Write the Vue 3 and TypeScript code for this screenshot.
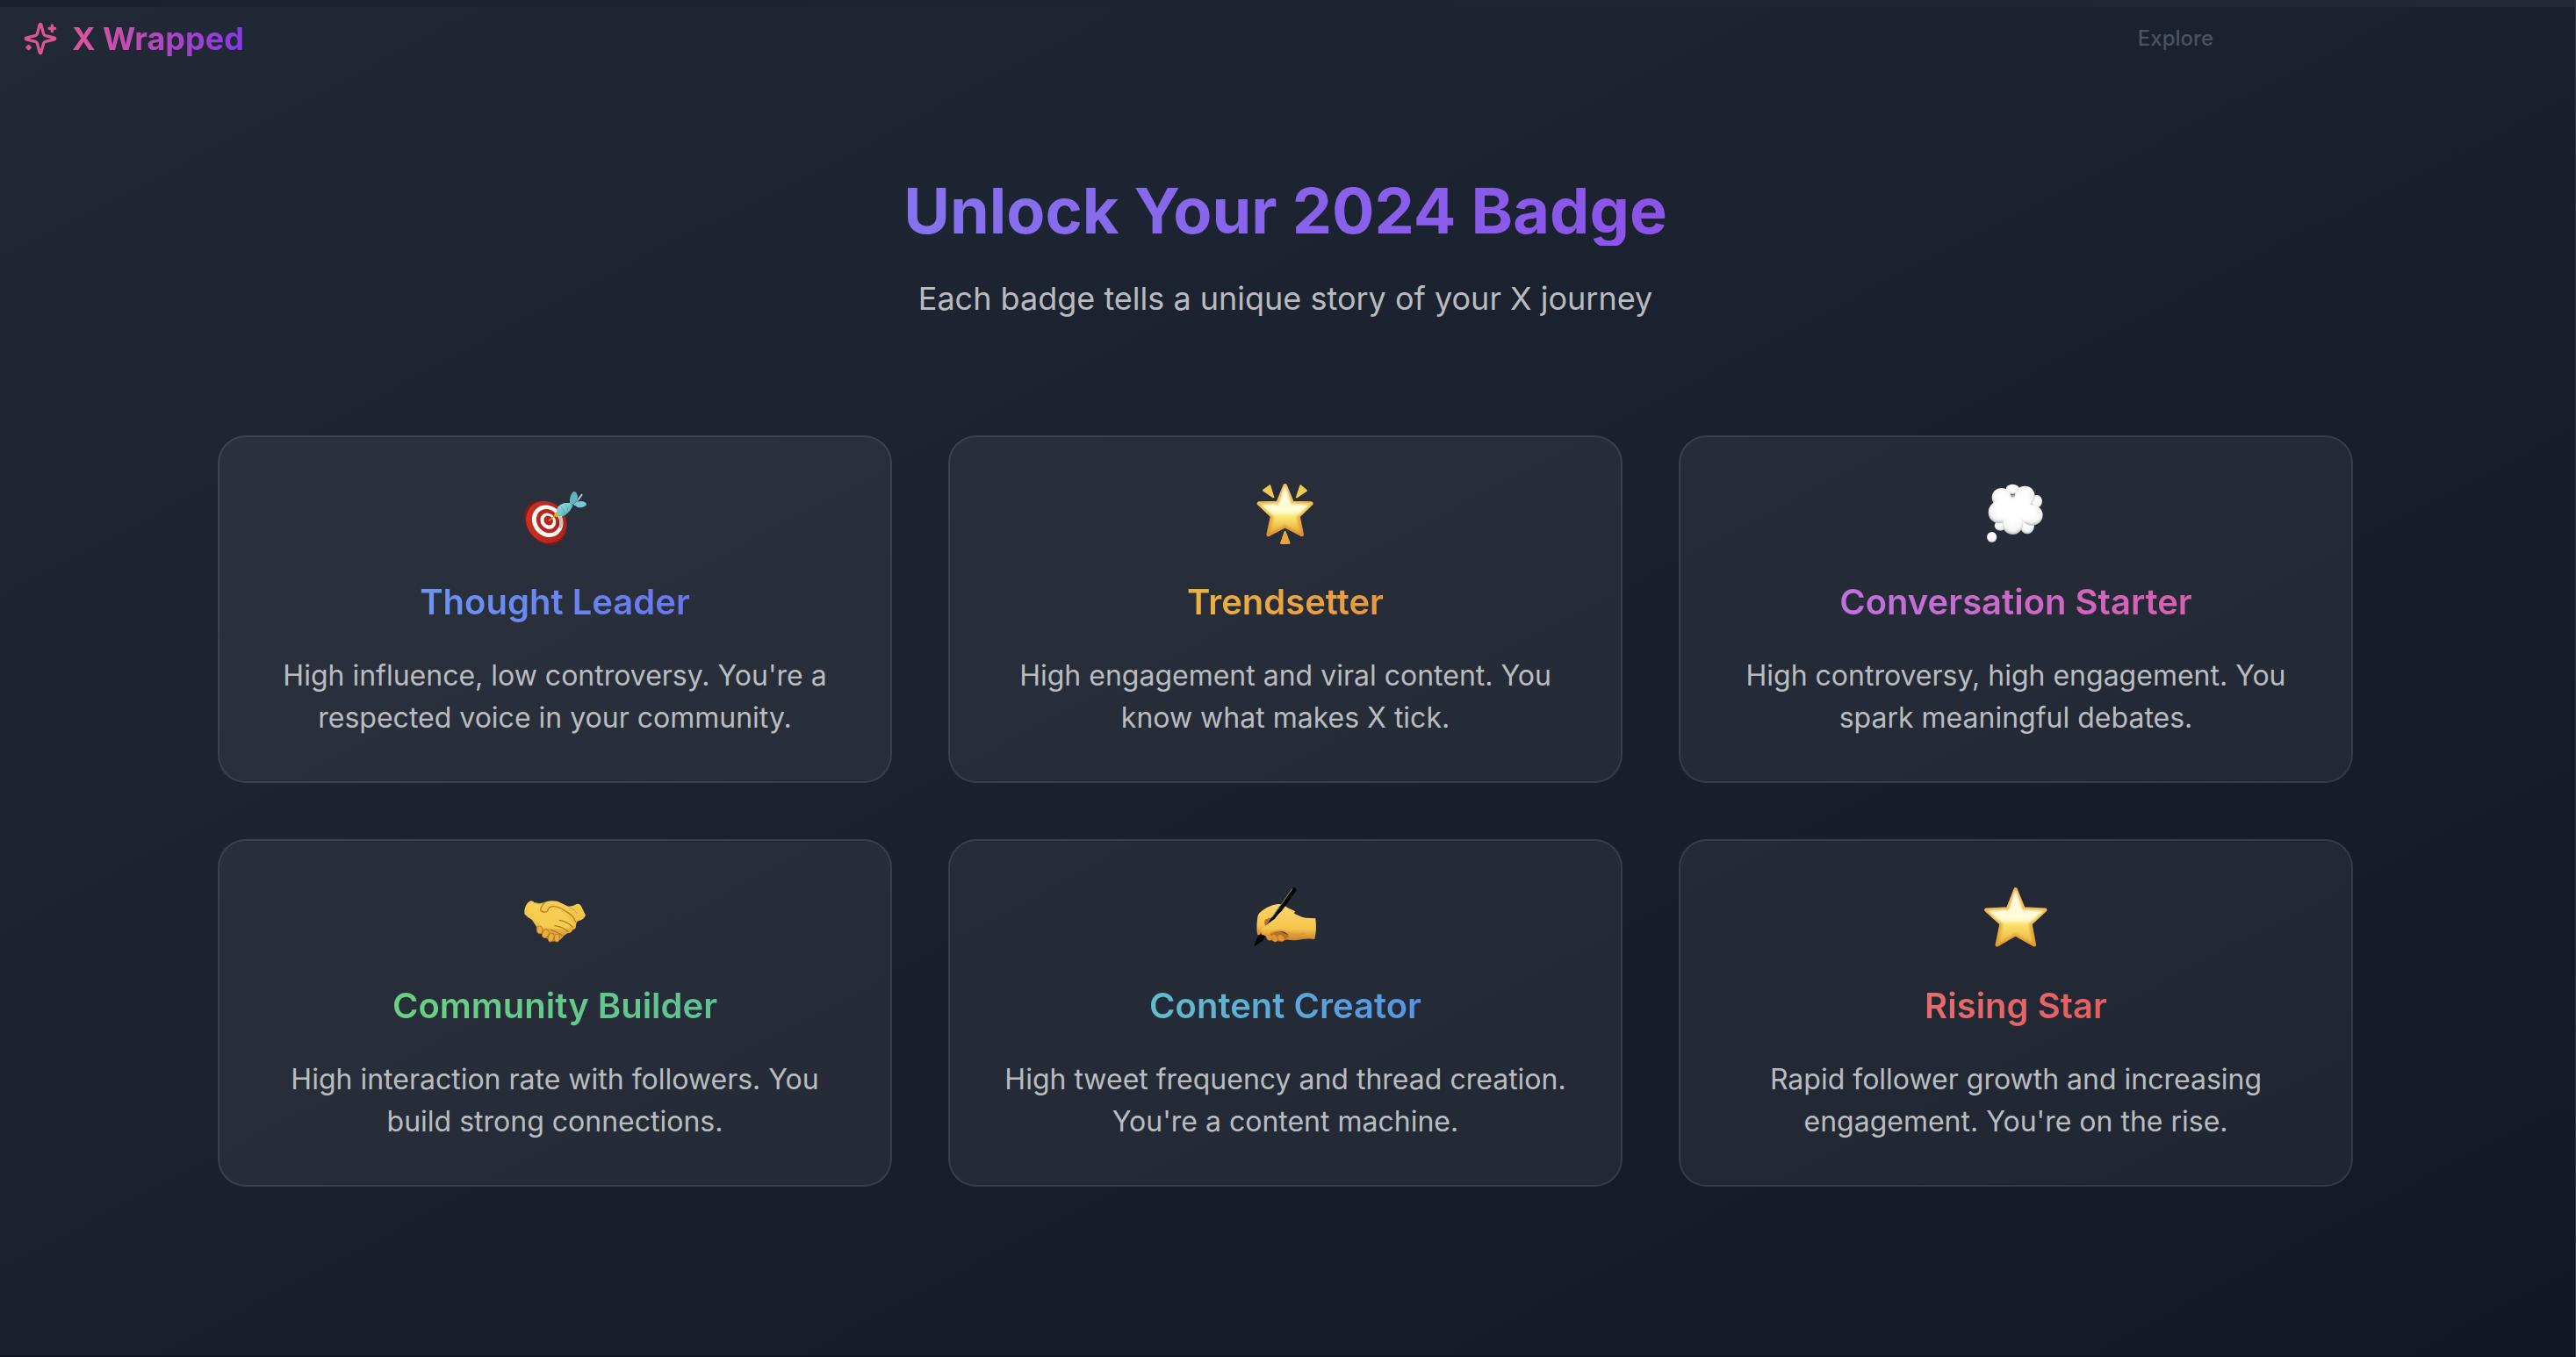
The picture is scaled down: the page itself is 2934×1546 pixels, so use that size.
<script setup lang="ts">
interface Badge {
  id: string
  title: string
  from: string
  to: string
  text: string
}

const badges: Badge[] = [
  { id: 'target', title: 'Thought Leader', from: '#6b95f3', to: '#6976ee', text: "High influence, low controversy. You're a respected voice in your community." },
  { id: 'glow', title: 'Trendsetter', from: '#ecb142', to: '#ea983e', text: 'High engagement and viral content. You know what makes X tick.' },
  { id: 'cloud', title: 'Conversation Starter', from: '#bf72e0', to: '#d95fae', text: 'High controversy, high engagement. You spark meaningful debates.' },
  { id: 'handshake', title: 'Community Builder', from: '#6cd081', to: '#60c295', text: 'High interaction rate with followers. You build strong connections.' },
  { id: 'writing', title: 'Content Creator', from: '#62bdca', to: '#5793e5', text: "High tweet frequency and thread creation. You're a content machine." },
  { id: 'star', title: 'Rising Star', from: '#e56c6c', to: '#e45e5f', text: "Rapid follower growth and increasing engagement. You're on the rise." },
]
</script>

<template>
  <div class="page">
    <div class="screen">
      <header class="header">
        <a class="brand" href="#">
          <svg class="brand-icon" viewBox="0 0 24 24" aria-hidden="true">
            <path d="M9.937 15.5A2 2 0 0 0 8.5 14.063l-6.135-1.582a.5.5 0 0 1 0-.962L8.5 9.936A2 2 0 0 0 9.937 8.5l1.582-6.135a.5.5 0 0 1 .963 0L14.063 8.5A2 2 0 0 0 15.5 9.937l6.135 1.581a.5.5 0 0 1 0 .964L15.5 14.063a2 2 0 0 0-1.437 1.437l-1.582 6.135a.5.5 0 0 1-.963 0z" />
            <path d="M20 3v4M22 5h-4M4 17v2M5 18H3" />
          </svg>
          <span class="brand-name">X Wrapped</span>
        </a>
        <nav><a class="nav-link" href="#explore">Explore</a></nav>
      </header>

      <main class="main">
        <h1 class="title">Unlock Your 2024 Badge</h1>
        <p class="subtitle">Each badge tells a unique story of your X journey</p>

        <div class="grid">
          <article v-for="b in badges" :key="b.id" class="card">
            <svg v-if="b.id === 'target'" class="emoji" viewBox="66 18 240 240" aria-hidden="true">
              <defs>
                <linearGradient id="t-red" x1="0" y1="0" x2="1" y2="1"><stop offset="0" stop-color="#cf3328" /><stop offset="1" stop-color="#a81f1b" /></linearGradient>
                <linearGradient id="t-dart" x1="0" y1="0" x2="1" y2="1"><stop offset="0" stop-color="#9be4ea" /><stop offset="1" stop-color="#4da3b0" /></linearGradient>
              </defs>
              <path d="M81 150C78 120 98 94 128 93L222 185C225 218 202 243 168 243C125 240 85 195 81 150Z" fill="#7f1a18" />
              <ellipse cx="157" cy="164" rx="66" ry="75" transform="rotate(-38 157 164)" fill="url(#t-red)" />
              <ellipse cx="161" cy="161" rx="51" ry="57" transform="rotate(-38 161 161)" fill="#fbf9f6" />
              <ellipse cx="162" cy="161" rx="37" ry="43" transform="rotate(-38 162 161)" fill="#b92620" />
              <ellipse cx="163" cy="161" rx="25" ry="29" transform="rotate(-38 163 161)" fill="#fbf9f6" />
              <ellipse cx="164" cy="159" rx="15" ry="17" transform="rotate(-38 164 159)" fill="#b3241f" />
              <path d="M200 148L213 146Q218 165 207 187L190 178Q200 163 200 148Z" fill="#3b2020" opacity=".25" />
              <path d="M167 159L199 131" stroke="#d9a31c" stroke-width="4" stroke-linecap="round" />
              <path d="M183 139L192 129L204 144L190 148Z" fill="#e5b420" />
              <path d="M254 104L278 71" stroke="#a3c7cc" stroke-width="6" stroke-linecap="round" />
              <path d="M192 130C192 113 202 103 222 99L243 99L248 108Q240 126 224 139Q208 148 200 145Z" fill="url(#t-dart)" />
              <path d="M207 111Q218 120 218 139M222 103Q231 112 231 130" stroke="#398d9c" stroke-width="3" fill="none" opacity=".45" />
              <path d="M237 103Q234 75 249 60Q259 58 264 76Q264 90 252 102Z" fill="#62b5c0" />
              <path d="M246 101Q264 91 283 94Q296 99 293 106Q283 118 264 114Z" fill="#73c8d1" />
              <path d="M241 108L269 88" stroke="#318493" stroke-width="3" />
            </svg>

            <svg v-else-if="b.id === 'glow'" class="emoji" viewBox="57 48 240 240" aria-hidden="true">
              <defs>
                <linearGradient id="g-edge" x1="0" y1="0" x2="0" y2="1"><stop offset="0" stop-color="#f2b95a" /><stop offset=".55" stop-color="#edc04a" /><stop offset="1" stop-color="#dd8f31" /></linearGradient>
                <linearGradient id="g-fill" x1="0" y1="0" x2="0" y2="1"><stop offset="0" stop-color="#fffdf0" /><stop offset=".55" stop-color="#fffbd0" /><stop offset=".66" stop-color="#f9e873" /><stop offset="1" stop-color="#edae3d" /></linearGradient>
                <filter id="g-soft"><feGaussianBlur stdDeviation="3" /></filter>
              </defs>
              <path d="M176 70L200 129L265 131L220 174L233 237L176 207L119 237L133 174L87 131L152 129Z" fill="url(#g-edge)" stroke="url(#g-edge)" stroke-width="14" stroke-linejoin="round" />
              <path d="M176 76L195 134L254 137L212 175L224 227L176 200L128 227L141 175L99 137L157 134Z" fill="url(#g-fill)" stroke="url(#g-fill)" stroke-width="5" stroke-linejoin="round" filter="url(#g-soft)" />
              <path d="M102 86L124 70L136 109ZM229 70L249 87L216 109ZM176 228L190 266H163Z" fill="#edca51" stroke="#edca51" stroke-width="6" stroke-linejoin="round" />
              <path d="M176 228L190 266H163Z" fill="#e7a53d" stroke="#e7a53d" stroke-width="6" stroke-linejoin="round" />
            </svg>

            <svg v-else-if="b.id === 'cloud'" class="emoji" viewBox="63 48 240 240" aria-hidden="true">
              <defs>
                <radialGradient id="c-puff" cx=".5" cy=".4" r=".6"><stop offset="0" stop-color="#fff" /><stop offset=".7" stop-color="#f6f6f6" /><stop offset="1" stop-color="#b8b8ba" /></radialGradient>
                <filter id="c-soft"><feGaussianBlur stdDeviation="6" /></filter>
              </defs>
              <ellipse cx="172" cy="82" rx="23" ry="17" fill="url(#c-puff)" />
              <ellipse cx="255" cy="124" rx="18" ry="22" fill="url(#c-puff)" />
              <ellipse cx="130" cy="207" rx="20" ry="17" fill="url(#c-puff)" />
              <ellipse cx="222" cy="208" rx="24" ry="27" fill="url(#c-puff)" />
              <ellipse cx="134" cy="110" rx="33" ry="32" fill="url(#c-puff)" />
              <ellipse cx="214" cy="105" rx="34" ry="34" fill="url(#c-puff)" />
              <ellipse cx="125" cy="161" rx="36" ry="38" fill="url(#c-puff)" />
              <ellipse cx="238" cy="171" rx="37" ry="35" fill="url(#c-puff)" />
              <ellipse cx="172" cy="201" rx="35" ry="36" fill="url(#c-puff)" />
              <path d="M114 137Q126 102 170 105Q201 91 230 116Q253 140 243 174Q217 198 187 191Q155 203 125 176Z" fill="#fff" filter="url(#c-soft)" />
              <ellipse cx="101" cy="246" rx="17" ry="18" fill="url(#c-puff)" />
            </svg>

            <svg v-else-if="b.id === 'handshake'" class="emoji" viewBox="66 18 240 240" aria-hidden="true">
              <defs>
                <linearGradient id="h-skin" x1="0" y1="0" x2="0" y2="1"><stop offset="0" stop-color="#f7cf54" /><stop offset=".6" stop-color="#eebc43" /><stop offset="1" stop-color="#d19431" /></linearGradient>
              </defs>
              <path d="M82 124Q80 92 100 80Q110 77 115 84Q136 91 151 84Q168 75 196 81L232 98Q249 98 260 90Q272 87 276 97L291 128Q285 143 268 147Q258 151 258 164Q259 175 247 178Q243 190 229 190L217 198Q203 218 190 216Q170 222 164 208Q146 209 142 192Q121 190 124 169L108 144Q91 135 82 124Z" fill="url(#h-skin)" />
              <path d="M91 119Q96 92 109 86L149 97L141 111Q151 122 168 101L197 103L253 158Q238 172 222 177L145 171Z" fill="#f8cf53" opacity=".8" />
              <path d="M151 85Q136 102 137 111Q148 123 161 114Q164 99 179 98Q199 97 225 116Q249 128 257 151" fill="none" stroke="#b97e22" stroke-width="4" stroke-linecap="round" />
              <path d="M202 145Q228 149 246 168M186 164Q215 168 231 185M172 178Q192 184 211 197" fill="none" stroke="#b27720" stroke-width="4" stroke-linecap="round" />
              <g fill="#e9ae3c" stroke="#b47822" stroke-width="3">
                <ellipse cx="134" cy="178" rx="10" ry="13" transform="rotate(-12 134 178)" />
                <ellipse cx="154" cy="191" rx="11" ry="15" transform="rotate(22 154 191)" />
                <ellipse cx="173" cy="204" rx="10" ry="15" transform="rotate(18 173 204)" />
                <ellipse cx="193" cy="206" rx="9" ry="13" />
              </g>
              <path d="M113 85Q131 91 149 86M235 101Q254 106 262 123" fill="none" stroke="#bc8528" stroke-width="3" opacity=".6" />
            </svg>

            <svg v-else-if="b.id === 'writing'" class="emoji" viewBox="57 48 240 240" aria-hidden="true">
              <defs>
                <linearGradient id="w-skin" x1="0" y1="0" x2="0" y2="1"><stop offset="0" stop-color="#fbd568" /><stop offset=".65" stop-color="#f6c44d" /><stop offset="1" stop-color="#c98227" /></linearGradient>
              </defs>
              <path d="M88 151Q116 126 146 121Q165 117 184 132L211 145Q185 184 150 194L108 231L81 224Q77 190 83 160Z" fill="url(#w-skin)" />
              <path d="M107 174Q123 163 139 168L111 197Q103 191 107 174Z" fill="#b57428" />
              <path d="M107 221Q121 199 145 207L201 231Q189 243 173 244Q157 253 149 244Q132 252 127 239Q112 245 107 221Z" fill="#b8701f" />
              <g fill="#dc9734">
                <ellipse cx="121" cy="232" rx="9" ry="13" transform="rotate(-20 121 232)" />
                <ellipse cx="140" cy="237" rx="9" ry="13" transform="rotate(-32 140 237)" />
                <ellipse cx="162" cy="236" rx="9" ry="13" transform="rotate(-45 162 236)" />
              </g>
              <path d="M203 63Q211 63 216 72L154 158L98 247L71 265Q73 247 89 225L143 147Z" fill="#050606" />
              <path d="M201 67L132 165" stroke="#8c8e91" stroke-width="3" />
              <path d="M95 207Q112 190 140 171Q158 145 180 134Q220 163 247 167L280 169Q285 207 277 240Q255 237 232 241Q201 247 177 239Q203 229 173 215Q147 207 121 224Q104 233 94 223Z" fill="url(#w-skin)" />
              <path d="M127 220Q155 201 187 217Q211 231 246 220" fill="none" stroke="#d49431" stroke-width="7" opacity=".45" />
              <path d="M85 228L104 225L96 244L71 265Q73 249 85 228Z" fill="#050606" />
            </svg>

            <svg v-else class="emoji" viewBox="63 48 240 240" aria-hidden="true">
              <defs>
                <linearGradient id="s-edge" x1="0" y1="0" x2="0" y2="1"><stop offset="0" stop-color="#efae50" /><stop offset=".5" stop-color="#efbf50" /><stop offset="1" stop-color="#df9a31" /></linearGradient>
                <linearGradient id="s-fill" x1="0" y1="0" x2="0" y2="1"><stop offset="0" stop-color="#fff9e6" /><stop offset=".55" stop-color="#fffbd5" /><stop offset=".66" stop-color="#f8e16a" /><stop offset="1" stop-color="#f0b843" /></linearGradient>
                <filter id="s-soft"><feGaussianBlur stdDeviation="3" /></filter>
              </defs>
              <path d="M182 70L209 136L283 140L232 187L246 259L182 223L119 259L134 187L82 140L156 136Z" fill="url(#s-edge)" stroke="url(#s-edge)" stroke-width="13" stroke-linejoin="round" />
              <path d="M182 76L204 141L272 145L224 187L237 249L182 216L128 249L142 187L94 145L161 141Z" fill="url(#s-fill)" stroke="url(#s-fill)" stroke-width="5" stroke-linejoin="round" filter="url(#s-soft)" />
            </svg>

            <h2 class="card-title" :style="{ backgroundImage: `linear-gradient(to right, ${b.from}, ${b.to})` }">{{ b.title }}</h2>
            <p class="card-text">{{ b.text }}</p>
          </article>
        </div>
      </main>
    </div>
  </div>
</template>

<style>
html,
body {
  margin: 0;
  background: #10151f;
}
</style>

<style scoped>
.page {
  box-sizing: border-box;
  min-height: 100vh;
  padding: 8px 0 2px;
  border-right: 1px solid #343844;
  background: linear-gradient(to right, #1b202d, #232836) top / 100% 8px no-repeat #10151f;
  font-family: Inter, 'Liberation Sans', sans-serif;
}

.screen {
  background: linear-gradient(to bottom right, #222936, #121825);
}

.header {
  display: flex;
  align-items: center;
  justify-content: space-between;
  height: 72px;
  padding: 0 412px 0 26px;
}

.brand {
  display: flex;
  align-items: center;
  gap: 16px;
  text-decoration: none;
}

.brand-icon {
  width: 40px;
  height: 40px;
  fill: none;
  stroke: #dd5592;
  stroke-width: 2;
  stroke-linecap: round;
  stroke-linejoin: round;
}

.brand-name {
  background: linear-gradient(to right, #e0559a, #8638e6);
  background-clip: text;
  color: transparent;
  font-size: 36px;
  font-weight: 700;
  line-height: 56px;
}

.nav-link {
  color: #4b5260;
  font-size: 24px;
  font-weight: 500;
  line-height: 32px;
  text-decoration: none;
}

.main {
  display: flex;
  flex-direction: column;
  align-items: center;
  padding: 120px 69px 192px 64px;
}

.title {
  margin: 0 0 32px;
  background: linear-gradient(to right, #8573ee, #8b53e8);
  background-clip: text;
  color: transparent;
  font-size: 72px;
  font-weight: 700;
  line-height: 80px;
}

.subtitle {
  margin: 0 0 128px;
  color: #babbbe;
  font-size: 36px;
  line-height: 56px;
}

.grid {
  display: grid;
  grid-template-columns: repeat(3, 1fr);
  gap: 64px;
  width: 100%;
  max-width: 2432px;
}

.card {
  display: flex;
  flex-direction: column;
  align-items: center;
  padding: 48px;
  border: 2px solid rgba(255, 255, 255, 0.09);
  border-radius: 32px;
  background: rgba(255, 255, 255, 0.055);
  text-align: center;
}

.emoji {
  width: 80px;
  height: 80px;
  margin-bottom: 32px;
}

.card-title {
  margin: 0 0 32px;
  background-clip: text;
  color: transparent;
  font-size: 40px;
  font-weight: 600;
  line-height: 56px;
}

.card-text {
  margin: 0;
  color: #bbbcbf;
  font-size: 32px;
  line-height: 48px;
}
</style>
